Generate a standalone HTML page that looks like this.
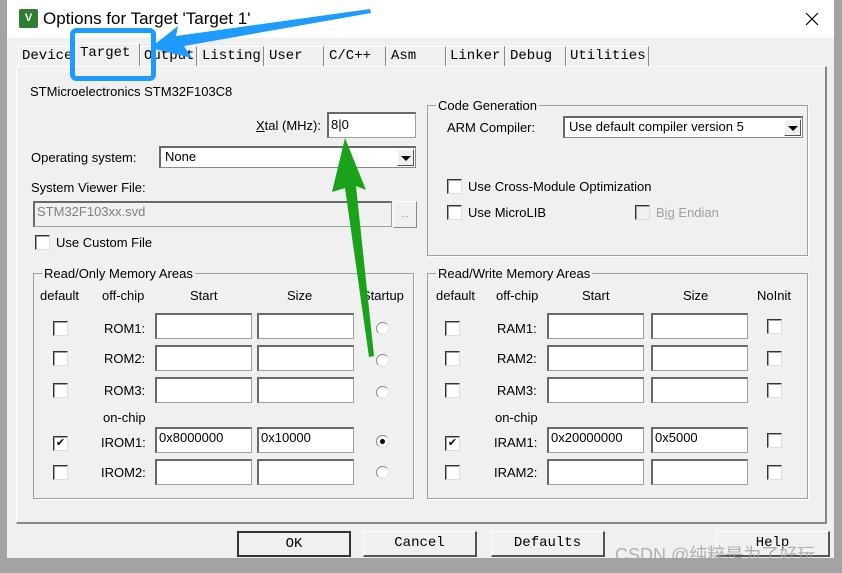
<!DOCTYPE html>
<html><head><meta charset="utf-8"><style>
*{box-sizing:border-box;margin:0;padding:0}
body{width:842px;height:573px;position:relative;background:#a3a3a3;font-family:"Liberation Sans",Arial,sans-serif;font-size:13px;color:#000;overflow:hidden}
.a{position:absolute;white-space:nowrap}
.win{position:absolute;left:7px;top:0;width:827px;height:558px;background:#f0f0f0}
.title{position:absolute;left:7px;top:0;width:827px;height:38px;background:#fff}
.tab{position:absolute;top:46px;height:20px;border:1px solid #fff;border-right:1px solid #888;border-bottom:none;font-family:"Liberation Mono",monospace;font-size:14px;padding:1px 0 0 3px;background:#f0f0f0}
.panel{position:absolute;left:16px;top:66px;width:811px;height:458px;border:1px solid #fff;border-right:2px solid #888;border-bottom:2px solid #888}
.inp{position:absolute;background:#fff;border:1px solid #a0a0a0;border-top:2px solid #696969;border-left:2px solid #696969;font-size:13px;padding:1px 2px;height:26px}
.cb{position:absolute;width:15px;height:15px;background:#fff;border:1px solid #333;border-right-color:#ddd;border-bottom-color:#ddd;box-shadow:inset 1px 1px 0 #a0a0a0}
.rd{position:absolute;width:13px;height:13px;border-radius:50%;background:#fff;border:1px solid #888;border-right-color:#ddd;border-bottom-color:#ddd}
.grp{position:absolute;border:1px solid #a0a0a0;box-shadow:1px 1px 0 #fff}
.gl{position:absolute;background:#f0f0f0;padding:0 2px;top:-8px;left:8px}
.btn{position:absolute;top:531px;height:26px;width:114px;border:1px solid #fff;border-right:2px solid #555;border-bottom:2px solid #555;font-family:"Liberation Mono",monospace;font-size:14px;text-align:center;line-height:23px}
.sel{position:absolute;background:#fff;border:1px solid #888;border-top:2px solid #696969;border-left:2px solid #696969;height:22px;padding:0 4px;line-height:18px}
.arr{position:absolute;right:1px;top:1px;width:17px;height:17px;background:#f0f0f0;border:1px solid #fff;border-right-color:#555;border-bottom-color:#555}
.arr:after{content:"";position:absolute;left:3px;top:6px;border-left:5px solid transparent;border-right:5px solid transparent;border-top:5px solid #000}
</style></head><body>
<div class="win"></div>
<div class="title"></div>
<div class="a" style="left:19px;top:9px;width:19px;height:19px;background:#2e7d32;border-radius:2px;color:#fff;font-size:11px;font-weight:bold;text-align:center;line-height:19px">V</div>
<div class="a" style="left:43px;top:9px;font-size:17px">Options for Target 'Target 1'</div>
<svg class="a" style="left:805px;top:12px" width="14" height="14"><path d="M1 1L13 13M13 1L1 13" stroke="#000" stroke-width="1.2"/></svg>

<div class="tab" style="left:18px;width:58px;border-right:none">Device</div>
<div class="tab" style="left:76px;top:43px;height:24px;width:64px;border-bottom:none">Target</div>
<div class="tab" style="left:140px;width:57px">Output</div>
<div class="tab" style="left:198px;width:66px">Listing</div>
<div class="tab" style="left:265px;width:59px">User</div>
<div class="tab" style="left:325px;width:61px">C/C++</div>
<div class="tab" style="left:387px;width:59px">Asm</div>
<div class="tab" style="left:446px;width:59px">Linker</div>
<div class="tab" style="left:506px;width:60px">Debug</div>
<div class="tab" style="left:566px;width:83px">Utilities</div>
<div class="panel"></div>

<div class="a" style="left:30px;top:84px">STMicroelectronics STM32F103C8</div>
<div class="a" style="left:256px;top:118px"><u>X</u>tal (MHz):</div>
<div class="inp" style="left:327px;top:112px;width:89px;padding-top:3px">8|0</div>
<div class="a" style="left:31px;top:150px">Operating system:</div>
<div class="sel" style="left:159px;top:146px;width:257px">None<div class="arr"></div></div>
<div class="a" style="left:31px;top:180px">System Viewer File:</div>
<div class="inp" style="left:33px;top:201px;width:359px;background:#f0f0f0;color:#808080">STM32F103xx.svd</div>
<div class="a" style="left:393px;top:201px;width:24px;height:27px;border:1px solid #fff;border-right-color:#888;border-bottom-color:#888;color:#999;font-size:9px;text-align:center;line-height:24px">...</div>
<div class="cb" style="left:35px;top:235px"></div>
<div class="a" style="left:56px;top:235px">Use Custom File</div>

<div class="grp" style="left:427px;top:105px;width:381px;height:151px"><div class="gl">Code Generation</div></div>
<div class="a" style="left:447px;top:120px">ARM Compiler:</div>
<div class="sel" style="left:563px;top:116px;width:240px">Use default compiler version 5<div class="arr"></div></div>
<div class="cb" style="left:447px;top:179px"></div><div class="a" style="left:468px;top:179px">Use Cross-Module Optimization</div>
<div class="cb" style="left:447px;top:205px"></div><div class="a" style="left:468px;top:205px">Use MicroLIB</div>
<div class="cb" style="left:635px;top:205px;background:#f0f0f0"></div><div class="a" style="left:656px;top:205px;color:#a0a0a0">B<u>i</u>g Endian</div>

<div class="grp" style="left:33px;top:273px;width:381px;height:226px"><div class="gl">Read/Only Memory Areas</div></div>
<div class="a" style="left:40px;top:288px">default</div><div class="a" style="left:102px;top:288px">off-chip</div><div class="a" style="left:190px;top:288px">Start</div><div class="a" style="left:287px;top:288px">Size</div><div class="a" style="left:362px;top:288px">Startup</div>
<div class="a" style="left:103px;top:410px">on-chip</div>

<div class="grp" style="left:427px;top:273px;width:381px;height:226px"><div class="gl">Read/Write Memory Areas</div></div>
<div class="a" style="left:436px;top:288px">default</div><div class="a" style="left:496px;top:288px">off-chip</div><div class="a" style="left:582px;top:288px">Start</div><div class="a" style="left:683px;top:288px">Size</div><div class="a" style="left:757px;top:288px">NoInit</div>
<div class="a" style="left:495px;top:410px">on-chip</div>

<div class="cb" style="left:53px;top:321px"></div><div class="a" style="left:104px;top:321px">ROM1:</div><div class="inp" style="left:155px;top:313px;width:97px"></div><div class="inp" style="left:257px;top:313px;width:97px"></div><div class="rd" style="left:376px;top:322px"></div>
<div class="cb" style="left:53px;top:351px"></div><div class="a" style="left:104px;top:351px">ROM2:</div><div class="inp" style="left:155px;top:345px;width:97px"></div><div class="inp" style="left:257px;top:345px;width:97px"></div><div class="rd" style="left:376px;top:354px"></div>
<div class="cb" style="left:53px;top:383px"></div><div class="a" style="left:104px;top:383px">ROM3:</div><div class="inp" style="left:155px;top:377px;width:97px"></div><div class="inp" style="left:257px;top:377px;width:97px"></div><div class="rd" style="left:376px;top:386px"></div>
<div class="cb" style="left:53px;top:436px;font-size:11px;line-height:12px;text-align:center">✔</div><div class="a" style="left:101px;top:435px">IROM1:</div><div class="inp" style="left:155px;top:427px;width:97px">0x8000000</div><div class="inp" style="left:257px;top:427px;width:97px">0x10000</div><div class="rd" style="left:376px;top:435px"><div style="position:absolute;left:3px;top:3px;width:5px;height:5px;border-radius:50%;background:#000"></div></div>
<div class="cb" style="left:53px;top:465px"></div><div class="a" style="left:101px;top:465px">IROM2:</div><div class="inp" style="left:155px;top:459px;width:97px"></div><div class="inp" style="left:257px;top:459px;width:97px"></div><div class="rd" style="left:376px;top:466px"></div>

<div class="cb" style="left:445px;top:321px"></div><div class="a" style="left:497px;top:321px">RAM1:</div><div class="inp" style="left:547px;top:313px;width:97px"></div><div class="inp" style="left:651px;top:313px;width:97px"></div><div class="cb" style="left:767px;top:319px"></div>
<div class="cb" style="left:445px;top:351px"></div><div class="a" style="left:497px;top:351px">RAM2:</div><div class="inp" style="left:547px;top:345px;width:97px"></div><div class="inp" style="left:651px;top:345px;width:97px"></div><div class="cb" style="left:767px;top:351px"></div>
<div class="cb" style="left:445px;top:383px"></div><div class="a" style="left:497px;top:383px">RAM3:</div><div class="inp" style="left:547px;top:377px;width:97px"></div><div class="inp" style="left:651px;top:377px;width:97px"></div><div class="cb" style="left:767px;top:383px"></div>
<div class="cb" style="left:445px;top:436px;font-size:11px;line-height:12px;text-align:center">✔</div><div class="a" style="left:494px;top:435px">IRAM1:</div><div class="inp" style="left:547px;top:427px;width:97px">0x20000000</div><div class="inp" style="left:651px;top:427px;width:97px">0x5000</div><div class="cb" style="left:767px;top:433px"></div>
<div class="cb" style="left:445px;top:465px"></div><div class="a" style="left:494px;top:465px">IRAM2:</div><div class="inp" style="left:547px;top:459px;width:97px"></div><div class="inp" style="left:651px;top:459px;width:97px"></div><div class="cb" style="left:767px;top:465px"></div>

<div class="btn" style="left:237px;border:2px solid #333">OK</div>
<div class="btn" style="left:363px">Cancel</div>
<div class="btn" style="left:491px">Defaults</div>
<div class="btn" style="left:716px">Help</div>
<div class="a" style="left:615px;top:541px;font-family:'Liberation Sans','Noto Sans CJK SC',sans-serif;font-size:18px;color:rgba(160,160,160,0.8)">CSDN @纯粹是为了好玩</div>

<svg class="a" style="left:0;top:0" width="842" height="573">
<rect x="72.5" y="30.5" width="81" height="48" rx="4" fill="none" stroke="#1e9bff" stroke-width="5"/>
<polygon points="150,48 178,26 176,36 370,9 371,13 184,46 192,58" fill="#1e9bff"/>
<polygon points="345,138 366,190 356,186 374,356 369,357 345,188 332,192" fill="#1aa31a"/>
</svg>
</body></html>
